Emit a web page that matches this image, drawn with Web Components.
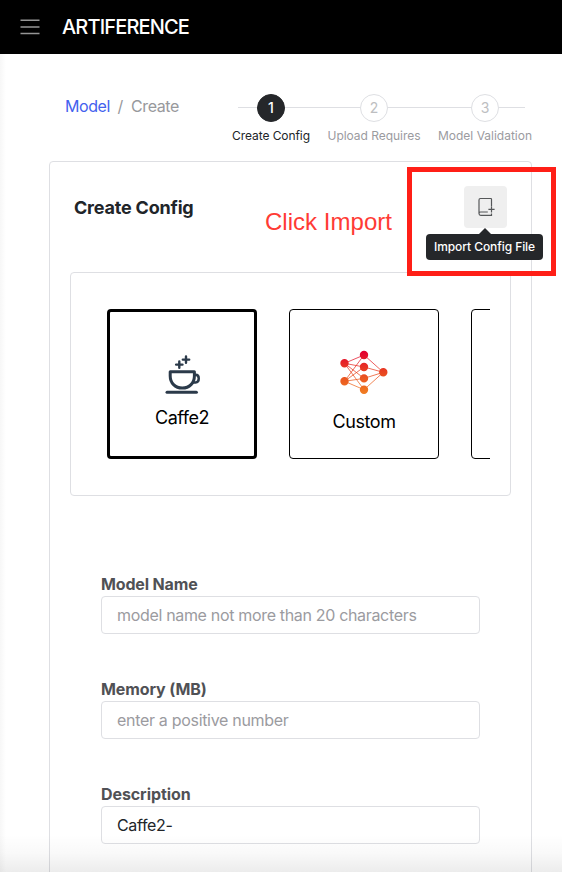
<!DOCTYPE html>
<html lang="en">
<head>
<meta charset="utf-8">
<title>Artiference</title>
<style>
html, body { margin: 0; height: 872px; overflow: hidden; background: #fff; }
body { font-family: Inter, "Liberation Sans", sans-serif; color: #212529; }
</style>
</head>
<body>
<app-shell>
  <app-header slot="header"><fit-text w="127">ARTIFERENCE</fit-text></app-header>
  <bread-crumb slot="top"><fit-text slot="parent" w="45">Model</fit-text><fit-text w="48">Create</fit-text></bread-crumb>
  <step-list slot="top">
    <step-item n="1" active><fit-text w="78">Create Config</fit-text></step-item>
    <step-item n="2"><fit-text w="93">Upload Requires</fit-text></step-item>
    <step-item n="3"><fit-text w="94">Model Validation</fit-text></step-item>
  </step-list>
  <config-card>
    <fit-text slot="title" w="119.5">Create Config</fit-text>
    <import-button slot="action"><fit-text w="101">Import Config File</fit-text></import-button>
    <model-carousel>
      <model-tile selected>
        <svg slot="icon" width="40" height="46" viewBox="162 352 40 46" fill="none" stroke="#2b3a4a" stroke-width="3" stroke-linecap="round" stroke-linejoin="round"><path d="M170.2 371.8H194.4V376C194.4 383 189.5 388.1 182.3 388.1S170.2 383 170.2 376Z"/><path stroke-width="2.5" d="M194.8 374.8H195.6C199.8 374.8 199.8 382.4 195.6 382.4H193.4"/><path d="M167 392.3H196.4"/><path stroke-width="2.4" d="M176.1 364.6H182.5M179.3 361.4V367.8M182.8 359.6H189.2M186 356.4V362.8"/></svg>
        <fit-text w="54">Caffe2</fit-text>
      </model-tile>
      <model-tile>
        <svg slot="icon" width="50" height="46" viewBox="339 350 50 46"><defs><linearGradient id="g" gradientUnits="userSpaceOnUse" x1="0" y1="352" x2="0" y2="393"><stop offset="0" stop-color="#e3002f"/><stop offset=".55" stop-color="#e94c20"/><stop offset="1" stop-color="#f07c22"/></linearGradient></defs><path stroke="url(#g)" stroke-width=".75" fill="none" d="M344.5 363.3L364 355M344.5 363.3L364 367M344.5 363.3L364 378.4M344.5 363.3L364 389.7M344.5 381.3L364 355M344.5 381.3L364 367M344.5 381.3L364 378.4M344.5 381.3L364 389.7M364 355L383.3 372.3M364 367L383.3 372.3M364 378.4L383.3 372.3M364 389.7L383.3 372.3"/><g fill="url(#g)"><path d="M340.3 363.3a4.2 4.2 0 1 0 8.4 0a4.2 4.2 0 1 0-8.4 0M340.3 381.3a4.2 4.2 0 1 0 8.4 0a4.2 4.2 0 1 0-8.4 0M359.8 355a4.2 4.2 0 1 0 8.4 0a4.2 4.2 0 1 0-8.4 0M359.8 367a4.2 4.2 0 1 0 8.4 0a4.2 4.2 0 1 0-8.4 0M359.8 378.4a4.2 4.2 0 1 0 8.4 0a4.2 4.2 0 1 0-8.4 0M359.8 389.7a4.2 4.2 0 1 0 8.4 0a4.2 4.2 0 1 0-8.4 0M379.1 372.3a4.2 4.2 0 1 0 8.4 0a4.2 4.2 0 1 0-8.4 0"/></g></svg>
        <fit-text w="63">Custom</fit-text>
      </model-tile>
      <model-tile></model-tile>
    </model-carousel>
    <form-field><fit-text slot="label" w="96.5">Model Name</fit-text><fit-text w="299.5">model name not more than 20 characters</fit-text></form-field>
    <form-field><fit-text slot="label" w="105.5">Memory (MB)</fit-text><fit-text w="171.5">enter a positive number</fit-text></form-field>
    <form-field filled><fit-text slot="label" w="89.5">Description</fit-text><fit-text w="55.5">Caffe2-</fit-text></form-field>
  </config-card>
  <red-callout slot="overlay"><fit-text w="127">Click Import</fit-text></red-callout>
</app-shell>
<script>
function define(name, html, init) {
  const t = document.createElement('template');
  t.innerHTML = html;
  customElements.define(name, class extends HTMLElement {
    constructor() {
      super();
      this.attachShadow({ mode: 'open' }).append(t.content.cloneNode(true));
    }
    connectedCallback() { if (init) init(this); }
  });
}

define('app-shell', `<style>
:host { display: block; position: relative; width: 562px; height: 872px; overflow: hidden; background: #fff; }
.top { display: flex; height: 107px; box-sizing: border-box; padding: 40px 30px 0 65px; justify-content: space-between; }
main { display: block; padding: 0 30px 0 49px; }
.edge { position: absolute; left: 0; top: 54px; bottom: 0; width: 6px; background: linear-gradient(90deg, #f7f7f7, rgba(255,255,255,0)); }
.fade { position: absolute; left: 0; right: 0; bottom: 0; height: 38px; background: linear-gradient(rgba(0,0,0,0), rgba(0,0,0,.025) 50%, rgba(0,0,0,.075)); }
</style><slot name="header"></slot><div class="top"><slot name="top"></slot></div><main><slot></slot></main>
<div class="edge"></div><div class="fade"></div><slot name="overlay"></slot>`);

define('app-header', `<style>
:host { display: flex; align-items: center; height: 54px; box-sizing: border-box; padding-left: 20px; gap: 21px; background: #000; color: #fff; font-size: 20px; font-weight: 500; line-height: 24px; }
svg { display: block; }
</style><svg width="21" height="18" viewBox="0 0 21 18" stroke="#959595" stroke-width="1.4"><path d="M.5 2.3H19.5M.5 9H19.5M.5 15.5H19.5"/></svg><slot></slot>`);

define('bread-crumb', `<style>
:host { display: flex; height: 24px; line-height: 24px; font-size: 16px; color: #98999c; }
.p { color: #4361ee; } i { font-style: normal; margin: 0 7px; width: 7px; text-align: center; }
</style><span class="p"><slot name="parent"></slot></span><i>/</i><slot></slot>`);

define('step-list', `<style>
:host { display: flex; gap: 17.5px; position: relative; height: 50px; }
.line { position: absolute; left: 6px; right: 7px; top: 13px; height: 1px; background: #dedfe3; }
</style><div class="line"></div><slot></slot>`);

define('step-item', `<style>
:host { display: flex; flex-direction: column; align-items: center; position: relative; font-size: 12px; line-height: 18px; color: #9b9b9f; }
b { display: block; width: 28px; height: 28px; box-sizing: border-box; border: 1px solid #dedfe3; border-radius: 50%; background: #fff; color: #bdbec1; font-size: 14px; font-weight: 400; line-height: 26px; text-align: center; margin-bottom: 5px; }
:host([active]) { color: #212529; }
:host([active]) b { background: #25272a; border-color: #25272a; color: #fff; font-weight: 500; }
</style><b></b><slot></slot>`, el => { el.shadowRoot.querySelector('b').textContent = el.getAttribute('n'); });

define('config-card', `<style>
:host { display: block; box-sizing: border-box; width: 483px; height: 760px; border: 1px solid #dedfe3; border-radius: 4px; padding: 0 20px; }
header { display: flex; height: 110px; box-sizing: border-box; padding: 24px 4px 0; justify-content: space-between; font-size: 18px; font-weight: 700; line-height: 44px; }
</style><header><slot name="title"></slot><slot name="action"></slot></header><slot></slot>`);

define('import-button', `<style>
:host { display: block; position: relative; width: 43px; height: 42px; }
button { display: grid; place-items: center; width: 43px; height: 42px; padding: 0; border: 0; border-radius: 4px; background: #efefef; }
.tip { position: absolute; left: -38px; top: 48px; width: 117px; height: 26px; border-radius: 4px; background: #25272a; color: #fff; font-size: 12px; font-weight: 500; line-height: 26px; text-align: center; z-index: 2; }
.tip::before { content: ""; position: absolute; left: 53px; top: -6px; border: 6px solid transparent; border-top: 0; border-bottom-color: #25272a; }
</style><button aria-label="Import"><svg width="19" height="20" viewBox="0 0 19 20" fill="none" stroke="#555759" stroke-width="1.2"><path d="M15.5 9V2.2Q15.5 1.5 14.8 1.5H4.4Q3 1.5 3 2.9V16.6Q3 18.4 4.8 18.4H15.5V16.6M3 16.6Q3 15 4.6 15H11.8M12.4 12.4H18.6M15.5 9.2V15.6"/></svg></button><div class="tip"><slot></slot></div>`);

define('model-carousel', `<style>
:host { display: block; box-sizing: border-box; width: 441px; height: 224px; border: 1px solid #dedfe3; border-radius: 4px; padding: 36px 20px; margin-bottom: 76px; }
.view { display: flex; gap: 32px; padding-left: 16px; overflow: hidden; }
</style><div class="view"><slot></slot></div>`);

define('model-tile', `<style>
:host { display: flex; flex: none; flex-direction: column; align-items: center; box-sizing: border-box; width: 150px; height: 150px; border: 1px solid #000; border-radius: 4px; padding-top: 40px; font-size: 18px; line-height: 26px; color: #000; gap: 13px; }
:host([selected]) { border-width: 3px; gap: 7px; }
</style><slot name="icon"></slot><slot></slot>`);

define('form-field', `<style>
:host { display: block; width: 379px; height: 105px; margin-left: 31px; font-size: 16px; }
label { display: block; height: 24px; line-height: 24px; font-weight: 700; color: #505155; }
.box { height: 38px; box-sizing: border-box; border: 1px solid #dedfe3; border-radius: 4px; padding-left: 15px; line-height: 37px; color: #9b9b9f; }
:host([filled]) .box { color: #212529; }
</style><label><slot name="label"></slot></label><div class="box"><slot></slot></div>`);

define('red-callout', `<style>
:host { position: absolute; left: 265px; top: 167px; width: 291px; height: 109px; display: flex; justify-content: space-between; color: #ff3b35; font: 24px/110px "Liberation Sans", sans-serif; }
.frame { box-sizing: border-box; width: 149px; height: 109px; border: 5px solid #ff1f17; }
</style><slot></slot><div class="frame"></div>`);

/* Spreads its letters so that the label takes the width given by "w". */
define('fit-text', `<style>
:host { display: inline-block; white-space: nowrap; }
span { display: inline-block; }
</style><span><slot></slot></span>`, el => {
  const span = el.shadowRoot.querySelector('span'), w = +el.getAttribute('w');
  const n = el.textContent.length;
  el.style.width = w + 'px';
  el.style.textAlign = 'left';
  span.style.letterSpacing = (w - span.getBoundingClientRect().width) / n + 'px';
});
</script>
</body>
</html>
